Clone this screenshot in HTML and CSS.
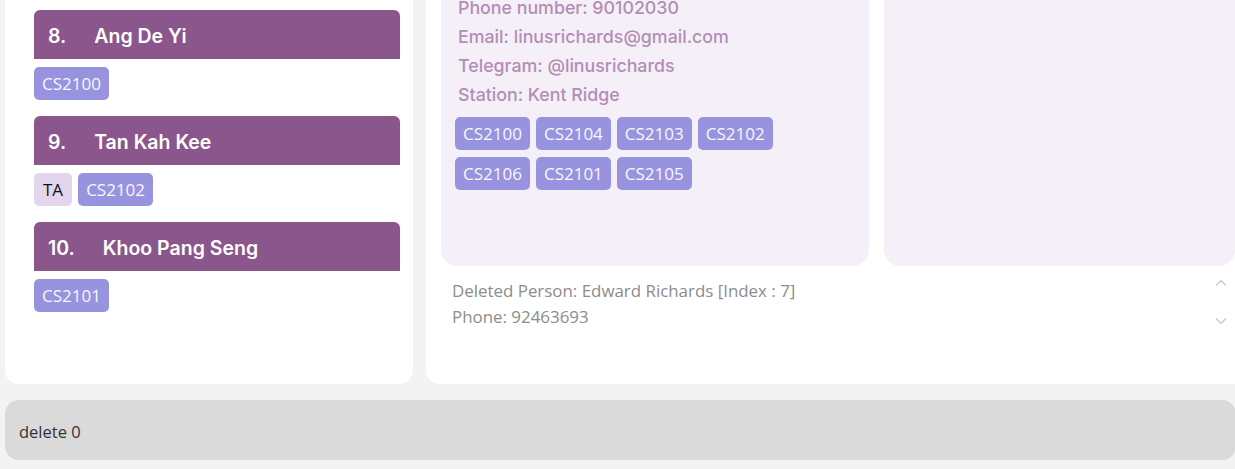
FILE: index.html
```html
<!DOCTYPE html>
<html lang="en">
<head>
<meta charset="utf-8">
<title>Address Book</title>
<link rel="stylesheet" href="styles.css">
</head>
<body>
<div class="app">
  <div class="main">
    <div class="list-panel">
      <div class="person">
        <div class="person-header"><span class="num">8.</span><span class="name">Ang De Yi</span></div>
        <div class="tags"><span class="tag">CS2100</span></div>
      </div>
      <div class="person">
        <div class="person-header"><span class="num">9.</span><span class="name">Tan Kah Kee</span></div>
        <div class="tags"><span class="tag tag-ta">TA</span><span class="tag">CS2102</span></div>
      </div>
      <div class="person">
        <div class="person-header"><span class="num">10.</span><span class="name">Khoo Pang Seng</span></div>
        <div class="tags"><span class="tag">CS2101</span></div>
      </div>
    </div>
    <div class="right-panel">
      <div class="cards-row">
        <div class="detail-card">
          <div class="detail-line">Phone number: 90102030</div>
          <div class="detail-line">Email: linusrichards@gmail.com</div>
          <div class="detail-line">Telegram: @linusrichards</div>
          <div class="detail-line">Station: Kent Ridge</div>
          <div class="tags detail-tags">
            <span class="tag">CS2100</span><span class="tag">CS2104</span><span class="tag">CS2103</span><span class="tag">CS2102</span>
            <span class="tag">CS2106</span><span class="tag">CS2101</span><span class="tag">CS2105</span>
          </div>
        </div>
        <div class="side-card"></div>
      </div>
      <div class="result">
        <div class="result-text">
          <div>Deleted Person: Edward Richards [Index : 7]</div>
          <div>Phone: 92463693</div>
        </div>
        <div class="scroll-col">
          <svg class="chev" width="12" height="7" viewBox="0 0 12 7"><polyline points="1,6.5 6,1.5 11,6.5" fill="none" stroke="#c4c4c4" stroke-width="1.2"/></svg>
          <svg class="chev" width="12" height="7" viewBox="0 0 12 7"><polyline points="1,0.5 6,5.5 11,0.5" fill="none" stroke="#c4c4c4" stroke-width="1.2"/></svg>
        </div>
      </div>
    </div>
  </div>
  <div class="command">delete 0</div>
</div>
</body>
</html>
```
FILE: styles.css
```css
html, body {
  margin: 0;
  padding: 0;
}
body {
  background: #f3f3f3;
  width: 1235px;
  height: 469px;
  overflow: hidden;
}
.app {
  width: 1250px;
  margin-top: -20px;
  display: flex;
  flex-direction: column;
}
.main {
  display: flex;
  gap: 13px;
  padding-left: 5px;
  height: 404px;
}
.list-panel {
  width: 408px;
  box-sizing: border-box;
  background: #ffffff;
  border-radius: 14px;
  padding: 30px 13px 0 29px;
}
.person {
  margin-bottom: 16px;
}
.person-header {
  height: 49px;
  box-sizing: border-box;
  background: #8b568b;
  border-radius: 6px 6px 0 0;
  display: flex;
  align-items: center;
  padding: 2px 0 0 14px;
  color: #ffffff;
  font-family: Inter, "Noto Sans", sans-serif;
  font-weight: 600;
  font-size: 19.5px;
}
.num {
  margin-right: 28px;
}
.tags {
  display: flex;
  flex-wrap: wrap;
  gap: 7px 6px;
  margin-top: 8px;
}
.tag {
  height: 33px;
  box-sizing: border-box;
  padding: 0 8px;
  border-radius: 5px;
  background: #9893de;
  color: #f7f7ff;
  font-family: "Open Sans", "Noto Sans", sans-serif;
  font-size: 17px;
  display: flex;
  align-items: center;
}
.tag-ta {
  padding: 0 9px;
  background: #e3d5ee;
  color: #111111;
}
.right-panel {
  flex: 1;
  background: #ffffff;
  border-radius: 14px;
  padding: 0 15px;
  display: flex;
  flex-direction: column;
}
.cards-row {
  display: flex;
  gap: 15px;
  height: 286px;
}
.detail-card {
  width: 428px;
  box-sizing: border-box;
  background: #f5f0f8;
  border-radius: 16px;
  padding: 13px 14px 0 14px;
}
.detail-line {
  padding-left: 3px;
  font-family: Inter, "Noto Sans", sans-serif;
  font-weight: 500;
  font-size: 17.8px;
  line-height: 29px;
  color: #b38db5;
}
.detail-tags {
  margin-top: 8px;
  width: 330px;
}
.side-card {
  flex: 1;
  background: #f5f0f8;
  border-radius: 16px;
}
.result {
  display: flex;
  padding: 12px 0 0 11px;
}
.result-text {
  flex: 1;
  font-family: "Open Sans", "Noto Sans", sans-serif;
  font-size: 16.9px;
  line-height: 26px;
  color: #8c8c8c;
}
.scroll-col {
  width: 12px;
  margin-right: 8px;
  padding-top: 1px;
  display: flex;
  flex-direction: column;
  gap: 32px;
}
.chev {
  display: block;
}
.command {
  margin: 16px 0 0 5px;
  width: 1231px;
  height: 60px;
  box-sizing: border-box;
  background: #dadada;
  border-radius: 14px;
  padding: 2px 0 0 14px;
  display: flex;
  align-items: center;
  font-family: "Open Sans", "Noto Sans", sans-serif;
  font-size: 16.5px;
  color: #333333;
}
```
